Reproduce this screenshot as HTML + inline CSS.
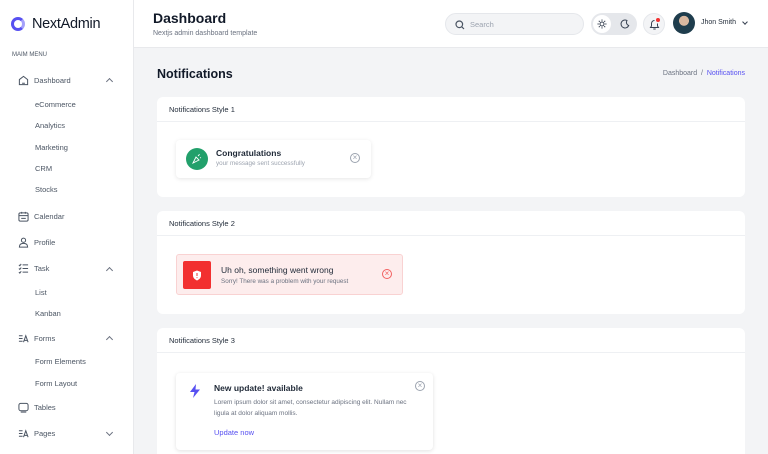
<!DOCTYPE html>
<html><head><meta charset="utf-8"><style>
*{box-sizing:border-box;margin:0;padding:0}
html,body{width:768px;height:454px;overflow:hidden}
body{font-family:"Liberation Sans",sans-serif;background:#f3f4f6;position:relative;color:#1c2434}
.sb{position:absolute;left:0;top:0;width:134px;height:454px;background:#fff;border-right:1px solid #e8e9ec}
.logo{position:absolute;left:11px;top:16px;display:flex;align-items:center;font-size:14.5px;color:#111928;letter-spacing:-.3px}
.logo .c{width:14px;height:14px;border-radius:50%;border:3px solid #5750f1;border-right-color:#a5a1fa;margin-right:7px}
.mm{position:absolute;left:12px;top:52px;font-size:6px;color:#4b5563}
.it{position:absolute;left:18px;font-size:7.5px;color:#4b5563;display:flex;align-items:center}
.it svg{width:11px;height:11px;margin-right:5px;stroke:#4b5563;fill:none;stroke-width:1.1}
.sub{position:absolute;left:35px;font-size:7.5px;color:#4b5563}
.ch{position:absolute;left:107px;width:5px;height:5px;border-left:1px solid #6b7280;border-top:1px solid #6b7280}
.up{transform:rotate(45deg)}
.dn{transform:rotate(225deg)}
.hd{position:absolute;left:134px;top:0;right:0;height:48px;background:#fff;border-bottom:1px solid #e8e9ec}
.h1{position:absolute;left:153px;top:10px;font-size:14px;font-weight:700;color:#111928}
.h2{position:absolute;left:153px;top:30px;font-size:7px;color:#6b7280}
.search{position:absolute;left:445px;top:13px;width:139px;height:22px;border-radius:11px;background:#f3f4f6;border:1px solid #e5e7eb;font-size:7.5px;color:#9ca3af;padding:6px 0 0 24px}
.tog{position:absolute;left:591px;top:13px;width:46px;height:22px;border-radius:11px;background:#e5e7eb}
.tog .k{position:absolute;left:2px;top:2px;width:18px;height:18px;border-radius:50%;background:#fff}
.bell{position:absolute;left:643px;top:13px;width:22px;height:22px;border-radius:50%;background:#f3f4f6;border:1px solid #e5e7eb}
.av{position:absolute;left:673px;top:12px;width:22px;height:22px;border-radius:50%;background:radial-gradient(circle at 50% 40%,#d9b8a0 0 28%,#1f3d4d 30%)}
.un{position:absolute;left:701px;top:19px;font-size:7px;color:#1f2937}
.pt{position:absolute;left:157px;top:67px;font-size:12.5px;font-weight:700;color:#111928}
.bc{position:absolute;right:23px;top:70px;font-size:7px;color:#6b7280}
.bc span{color:#5750f1}
.card{position:absolute;left:157px;width:588px;background:#fff;border-radius:6px}
.card .t{height:25px;border-bottom:1px solid #eef0f3;font-size:7.5px;padding:8px 0 0 12px;color:#1f2937}
.x{position:absolute;width:10px;height:10px;border-radius:50%;border:1px solid #9ca3af;font-size:8px;line-height:8px;text-align:center;color:#9ca3af}
</style></head><body>
<div class="sb">
<div class="logo"><div class="c"></div>NextAdmin</div>
<div class="mm">MAIM MENU</div>
<div class="it" style="top:75px"><svg viewBox="0 0 12 12"><path d="M1.5 5L6 1.5 10.5 5v5.5h-9z"/><path d="M4.5 9h3"/></svg>Dashboard</div><div class="ch up" style="top:79px"></div>
<div class="sub" style="top:100px">eCommerce</div>
<div class="sub" style="top:121px">Analytics</div>
<div class="sub" style="top:143px">Marketing</div>
<div class="sub" style="top:164px">CRM</div>
<div class="sub" style="top:185px">Stocks</div>
<div class="it" style="top:211px"><svg viewBox="0 0 12 12"><rect x="1" y="2" width="10" height="9" rx="1.5"/><path d="M1 5h10M4 1v2M8 1v2M3.5 8h5"/></svg>Calendar</div>
<div class="it" style="top:237px"><svg viewBox="0 0 12 12"><circle cx="6" cy="3.5" r="2.3"/><path d="M1.5 11c0-3 2-4 4.5-4s4.5 1 4.5 4z"/></svg>Profile</div>
<div class="it" style="top:263px"><svg viewBox="0 0 12 12"><path d="M1 2l1 1 1.5-2M1 6l1 1 1.5-2M1 10l1 1 1.5-2M5 2h6M5 6h6M5 10h6"/></svg>Task</div><div class="ch up" style="top:268px"></div>
<div class="sub" style="top:288px">List</div>
<div class="sub" style="top:309px">Kanban</div>
<div class="it" style="top:333px"><svg viewBox="0 0 12 12"><path d="M1 3h4M1 6h4M1 9h4M6 10l2.5-7 2.5 7M7 8h3"/></svg>Forms</div><div class="ch up" style="top:337px"></div>
<div class="sub" style="top:357px">Form Elements</div>
<div class="sub" style="top:379px">Form Layout</div>
<div class="it" style="top:402px"><svg viewBox="0 0 12 12"><rect x="1" y="1.5" width="10" height="8" rx="2"/><path d="M3 11h6"/></svg>Tables</div>
<div class="it" style="top:428px"><svg viewBox="0 0 12 12"><path d="M1 3h4M1 6h4M1 9h4M6 10l2.5-7 2.5 7M7 8h3"/></svg>Pages</div><div class="ch dn" style="top:430px"></div>
</div>
<div class="hd"></div>
<div class="h1">Dashboard</div>
<div class="h2">Nextjs admin dashboard template</div>
<div class="search">Search<svg style="position:absolute;left:9px;top:6px" width="10" height="10" viewBox="0 0 10 10" fill="none" stroke="#4b5563" stroke-width="1.2"><circle cx="4.3" cy="4.3" r="3.3"/><path d="M6.8 6.8L9 9"/></svg></div>
<div class="tog"><div class="k"></div>
<svg style="position:absolute;left:6px;top:6px" width="10" height="10" viewBox="0 0 10 10" fill="none" stroke="#374151" stroke-width="1"><circle cx="5" cy="5" r="2"/><path d="M5 0.5v1.3M5 8.2v1.3M0.5 5h1.3M8.2 5h1.3M1.8 1.8l1 1M7.2 7.2l1 1M1.8 8.2l1-1M7.2 2.8l1-1"/></svg>
<svg style="position:absolute;left:29px;top:6px" width="10" height="10" viewBox="0 0 10 10" fill="none" stroke="#374151" stroke-width="1"><path d="M7 1.5A4 4 0 1 0 8.7 6.5 3.3 3.3 0 0 1 7 1.5z"/></svg></div>
<div class="bell"><svg style="position:absolute;left:5px;top:5px" width="11" height="11" viewBox="0 0 11 11" fill="none" stroke="#374151" stroke-width="1"><path d="M5.5 1.5A3 3 0 0 0 2.5 4.5v2.5L1.5 8.5h8L8.5 7V4.5M4.3 10h2.4"/></svg><div style="position:absolute;left:12px;top:4px;width:4px;height:4px;border-radius:50%;background:#f23030"></div></div>
<div class="av"></div>
<div class="un">Jhon Smith</div>
<div class="ch" style="left:743px;top:20px;width:4px;height:4px;transform:rotate(225deg);border-color:#374151"></div>
<div class="pt">Notifications</div>
<div class="bc">Dashboard&nbsp; / &nbsp;<span>Notifications</span></div>

<div class="card" style="top:97px;height:100px"><div class="t">Notifications Style 1</div>
<div style="position:absolute;left:19px;top:43px;width:195px;height:38px;background:#fff;border-radius:4px;box-shadow:0 1px 4px rgba(0,0,0,.1)">
<div style="position:absolute;left:10px;top:8px;width:22px;height:22px;border-radius:50%;background:#22a06b"></div>
<svg style="position:absolute;left:16px;top:14px" width="10" height="10" viewBox="0 0 10 10" fill="none" stroke="#fff" stroke-width=".9"><path d="M1 9l3-6 3 3zM6 2l1-1M8 4l1-.5M7 1l.5-.8"/></svg>
<div style="position:absolute;left:40px;top:8px;font-size:8.5px;font-weight:700;color:#1f2937">Congratulations</div>
<div style="position:absolute;left:40px;top:20px;font-size:6.3px;color:#9ca3af">your message sent successfully</div>
<div class="x" style="left:174px;top:13px">×</div></div></div>

<div class="card" style="top:211px;height:103px"><div class="t">Notifications Style 2</div>
<div style="position:absolute;left:19px;top:43px;width:227px;height:41px;background:#fdeded;border:1px solid #f9d2d2;border-radius:3px">
<div style="position:absolute;left:6px;top:6px;width:28px;height:28px;background:#f23030;border-radius:2px"></div>
<svg style="position:absolute;left:15px;top:15px" width="10" height="11" viewBox="0 0 10 11"><path d="M5 .5L9 2v3.5c0 2.5-2 4-4 5-2-1-4-2.5-4-5V2z" fill="#fff"/><path d="M5 3v3M5 7.3v.8" stroke="#f23030" stroke-width="1"/></svg>
<div style="position:absolute;left:44px;top:10px;font-size:8.5px;color:#1f2937">Uh oh, something went wrong</div>
<div style="position:absolute;left:44px;top:23px;font-size:6.3px;color:#6b7280">Sorry! There was a problem with your request</div>
<div class="x" style="left:205px;top:14px;border-color:#f26060;color:#f26060">×</div></div></div>

<div class="card" style="top:328px;height:126px;border-radius:6px 6px 0 0"><div class="t">Notifications Style 3</div>
<div style="position:absolute;left:19px;top:45px;width:257px;height:77px;background:#fff;border-radius:4px;box-shadow:0 1px 4px rgba(0,0,0,.12)">
<svg style="position:absolute;left:13px;top:11px" width="12" height="14" viewBox="0 0 12 14"><path d="M7 0L1 8h4.5L4 14l7-8.5H6.5z" fill="#5750f1"/></svg>
<div style="position:absolute;left:38px;top:10px;font-size:8.5px;font-weight:700;color:#1f2937">New update! available</div>
<div style="position:absolute;left:38px;top:24px;font-size:6.5px;line-height:11px;color:#6b7280;width:200px">Lorem ipsum dolor sit amet, consectetur adipiscing elit. Nullam nec ligula at dolor aliquam mollis.</div>
<div style="position:absolute;left:38px;top:55px;font-size:7.5px;color:#5750f1">Update now</div>
<div class="x" style="left:239px;top:8px">×</div></div></div>
</body></html>
